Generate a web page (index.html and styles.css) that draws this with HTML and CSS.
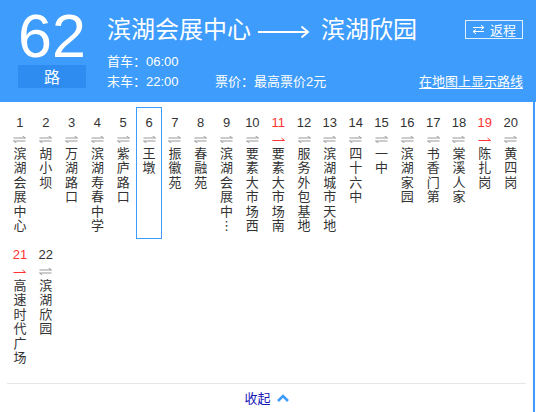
FILE: index.html
```html
<!DOCTYPE html>
<html lang="zh-CN">
<head>
<meta charset="utf-8">
<title>62路</title>
<link rel="stylesheet" href="styles.css">
</head>
<body>
<div class="page">
  <header class="head">
    <div class="num-block">
      <div class="num">62</div>
      <div class="lu">路</div>
    </div>
    <div class="info">
      <div class="title-row">
        <h1 class="title">
          <span>滨湖会展中心</span>
          <svg class="dir-arrow" width="52" height="14" viewBox="0 0 52 14"><path d="M0 7H50M43.5 1.5L50 7L43.5 12.5" fill="none" stroke="#fff" stroke-width="2"/></svg>
          <span>滨湖欣园</span>
        </h1>
        <a class="return" href="#">
          <svg width="13" height="9" viewBox="0 0 13 9"><path d="M1 2.5H12M9 0.2L12 2.5L9 4.5M12 6.5H1M4 4.5L1 6.5L4 8.8" fill="none" stroke="#fff" stroke-width="1"/></svg>
          <span>返程</span>
        </a>
      </div>
      <div class="meta">首车：06:00</div>
      <div class="meta meta-row">
        <span class="last">末车：22:00</span>
        <span class="price">票价：最高票价2元</span>
        <a class="maplink" href="#">在地图上显示路线</a>
      </div>
    </div>
  </header>

  <section class="stops">
    <ul class="stop-grid">
      <li class="stop"><span class="no">1</span><svg class="way" width="13" height="7" viewBox="0 0 13 7"><path d="M0.5 2H12.5M9.5 0L12.5 2M0.5 5H12.5M0.5 5L3.5 7" fill="none" stroke="#999"/></svg><span class="name">滨湖会展中心</span></li>
      <li class="stop"><span class="no">2</span><svg class="way" width="13" height="7" viewBox="0 0 13 7"><path d="M0.5 2H12.5M9.5 0L12.5 2M0.5 5H12.5M0.5 5L3.5 7" fill="none" stroke="#999"/></svg><span class="name">胡小坝</span></li>
      <li class="stop"><span class="no">3</span><svg class="way" width="13" height="7" viewBox="0 0 13 7"><path d="M0.5 2H12.5M9.5 0L12.5 2M0.5 5H12.5M0.5 5L3.5 7" fill="none" stroke="#999"/></svg><span class="name">万湖路口</span></li>
      <li class="stop"><span class="no">4</span><svg class="way" width="13" height="7" viewBox="0 0 13 7"><path d="M0.5 2H12.5M9.5 0L12.5 2M0.5 5H12.5M0.5 5L3.5 7" fill="none" stroke="#999"/></svg><span class="name">滨湖寿春中学</span></li>
      <li class="stop"><span class="no">5</span><svg class="way" width="13" height="7" viewBox="0 0 13 7"><path d="M0.5 2H12.5M9.5 0L12.5 2M0.5 5H12.5M0.5 5L3.5 7" fill="none" stroke="#999"/></svg><span class="name">紫庐路口</span></li>
      <li class="stop active"><span class="no">6</span><svg class="way" width="13" height="7" viewBox="0 0 13 7"><path d="M0.5 2H12.5M9.5 0L12.5 2M0.5 5H12.5M0.5 5L3.5 7" fill="none" stroke="#999"/></svg><span class="name">王墩</span></li>
      <li class="stop"><span class="no">7</span><svg class="way" width="13" height="7" viewBox="0 0 13 7"><path d="M0.5 2H12.5M9.5 0L12.5 2M0.5 5H12.5M0.5 5L3.5 7" fill="none" stroke="#999"/></svg><span class="name">振徽苑</span></li>
      <li class="stop"><span class="no">8</span><svg class="way" width="13" height="7" viewBox="0 0 13 7"><path d="M0.5 2H12.5M9.5 0L12.5 2M0.5 5H12.5M0.5 5L3.5 7" fill="none" stroke="#999"/></svg><span class="name">春融苑</span></li>
      <li class="stop"><span class="no">9</span><svg class="way" width="13" height="7" viewBox="0 0 13 7"><path d="M0.5 2H12.5M9.5 0L12.5 2M0.5 5H12.5M0.5 5L3.5 7" fill="none" stroke="#999"/></svg><span class="name">滨湖会展中⋮</span></li>
      <li class="stop"><span class="no">10</span><svg class="way" width="13" height="7" viewBox="0 0 13 7"><path d="M0.5 2H12.5M9.5 0L12.5 2M0.5 5H12.5M0.5 5L3.5 7" fill="none" stroke="#999"/></svg><span class="name">要素大市场西</span></li>
      <li class="stop oneway"><span class="no">11</span><svg class="way" width="13" height="7" viewBox="0 0 13 7"><path d="M0.5 4.5H12.5M9.5 2L12.5 4.5" fill="none" stroke="#f33"/></svg><span class="name">要素大市场南</span></li>
      <li class="stop"><span class="no">12</span><svg class="way" width="13" height="7" viewBox="0 0 13 7"><path d="M0.5 2H12.5M9.5 0L12.5 2M0.5 5H12.5M0.5 5L3.5 7" fill="none" stroke="#999"/></svg><span class="name">服务外包基地</span></li>
      <li class="stop"><span class="no">13</span><svg class="way" width="13" height="7" viewBox="0 0 13 7"><path d="M0.5 2H12.5M9.5 0L12.5 2M0.5 5H12.5M0.5 5L3.5 7" fill="none" stroke="#999"/></svg><span class="name">滨湖城市天地</span></li>
      <li class="stop"><span class="no">14</span><svg class="way" width="13" height="7" viewBox="0 0 13 7"><path d="M0.5 2H12.5M9.5 0L12.5 2M0.5 5H12.5M0.5 5L3.5 7" fill="none" stroke="#999"/></svg><span class="name">四十六中</span></li>
      <li class="stop"><span class="no">15</span><svg class="way" width="13" height="7" viewBox="0 0 13 7"><path d="M0.5 2H12.5M9.5 0L12.5 2M0.5 5H12.5M0.5 5L3.5 7" fill="none" stroke="#999"/></svg><span class="name">一中</span></li>
      <li class="stop"><span class="no">16</span><svg class="way" width="13" height="7" viewBox="0 0 13 7"><path d="M0.5 2H12.5M9.5 0L12.5 2M0.5 5H12.5M0.5 5L3.5 7" fill="none" stroke="#999"/></svg><span class="name">滨湖家园</span></li>
      <li class="stop"><span class="no">17</span><svg class="way" width="13" height="7" viewBox="0 0 13 7"><path d="M0.5 2H12.5M9.5 0L12.5 2M0.5 5H12.5M0.5 5L3.5 7" fill="none" stroke="#999"/></svg><span class="name">书香门第</span></li>
      <li class="stop"><span class="no">18</span><svg class="way" width="13" height="7" viewBox="0 0 13 7"><path d="M0.5 2H12.5M9.5 0L12.5 2M0.5 5H12.5M0.5 5L3.5 7" fill="none" stroke="#999"/></svg><span class="name">棠溪人家</span></li>
      <li class="stop oneway"><span class="no">19</span><svg class="way" width="13" height="7" viewBox="0 0 13 7"><path d="M0.5 4.5H12.5M9.5 2L12.5 4.5" fill="none" stroke="#f33"/></svg><span class="name">陈扎岗</span></li>
      <li class="stop"><span class="no">20</span><svg class="way" width="13" height="7" viewBox="0 0 13 7"><path d="M0.5 2H12.5M9.5 0L12.5 2M0.5 5H12.5M0.5 5L3.5 7" fill="none" stroke="#999"/></svg><span class="name">黄四岗</span></li>
      <li class="stop oneway"><span class="no">21</span><svg class="way" width="13" height="7" viewBox="0 0 13 7"><path d="M0.5 4.5H12.5M9.5 2L12.5 4.5" fill="none" stroke="#f33"/></svg><span class="name">高速时代广场</span></li>
      <li class="stop"><span class="no">22</span><svg class="way" width="13" height="7" viewBox="0 0 13 7"><path d="M0.5 2H12.5M9.5 0L12.5 2M0.5 5H12.5M0.5 5L3.5 7" fill="none" stroke="#999"/></svg><span class="name">滨湖欣园</span></li>
    </ul>
    <div class="fold">
      <a href="#">收起<svg width="12" height="8" viewBox="0 0 12 8"><path d="M1 7L6 2L11 7" fill="none" stroke="#3d9cfc" stroke-width="2.6"/></svg></a>
    </div>
  </section>
</div>
</body>
</html>
```

FILE: styles.css
```css
* { box-sizing: border-box; }
html, body { margin: 0; padding: 0; background: #fff; }
body {
  font-family: "Liberation Sans", "Noto Sans CJK SC", sans-serif;
  color: #333;
  overflow: hidden;
}
.page { width: 536px; }

/* header */
.head {
  display: flex;
  align-items: flex-start;
  height: 102px;
  padding: 0 13px 0 18px;
  background: #3d9cfc;
  color: #fff;
}
.num-block { width: 68px; padding-top: 10px; }
.num {
  font-family: "Liberation Sans", sans-serif;
  font-size: 61px;
  line-height: 52px;
  text-align: center;
}
.lu {
  margin-top: 3px;
  height: 23px;
  line-height: 23px;
  background: #2e8cf0;
  text-align: center;
  font-family: "Noto Sans CJK SC", sans-serif;
  font-size: 16px;
}
.info { flex: 1; margin-left: 21px; padding-top: 11px; }
.title-row {
  display: flex;
  align-items: center;
  justify-content: space-between;
  height: 34px;
}
.title {
  margin: 0;
  display: flex;
  align-items: flex-start;
  font-family: "Noto Sans CJK SC", sans-serif;
  font-weight: normal;
  font-size: 24px;
  line-height: 34px;
}
.dir-arrow { margin: 14px 11px 0 7px; }
.return {
  display: flex;
  align-items: center;
  width: 58px;
  height: 19px;
  margin-top: 2px;
  padding-left: 6px;
  border: 1px solid #e2efff;
  color: #fff;
  text-decoration: none;
  font-family: "Noto Sans CJK SC", sans-serif;
  font-size: 13px;
  line-height: 17px;
}
.return svg { margin-right: 5px; }
.meta {
  font-size: 13px;
  line-height: 20px;
}
.title-row + .meta { margin-top: 7px; }
.meta-row { display: flex; }
.last { width: 108px; }
.maplink {
  margin-left: auto;
  color: #fff;
  text-decoration: underline;
  text-underline-offset: 2px;
}

/* stops */
.stops {
  width: 535px;
  padding: 5px 7px 0 7px;
  border-right: 2px solid #3d9cfc;
  height: 310px;
}
.stop-grid {
  list-style: none;
  margin: 0;
  padding: 0;
  display: grid;
  grid-template-columns: repeat(20, 25.84px);
  grid-auto-rows: 132px;
}
.stop {
  display: flex;
  flex-direction: column;
  align-items: center;
  padding-top: 7px;
  border: 1px solid transparent;
}
.stop.active { border-color: #3d9cfc; }
.no {
  font-size: 13px;
  line-height: 15px;
  color: #333;
}
.oneway .no { color: #f33; }
.way { display: block; margin-top: 6px; }
.name {
  display: block;
  width: 13px;
  margin-top: 3px;
  font-family: "Noto Sans CJK SC", "DejaVu Sans", sans-serif;
  font-size: 13px;
  line-height: 14.4px;
  color: #333;
  text-align: center;
  word-break: break-all;
  line-break: anywhere;
}
.fold {
  margin-top: 12px;
  border-top: 1px solid #e6e6e6;
  padding-top: 4px;
  text-align: center;
  line-height: 20px;
}
.fold a {
  display: inline-flex;
  align-items: center;
  color: #1717b8;
  text-decoration: none;
  font-family: "Noto Sans CJK SC", sans-serif;
  font-size: 13px;
}
.fold svg { margin-left: 6px; }
```
